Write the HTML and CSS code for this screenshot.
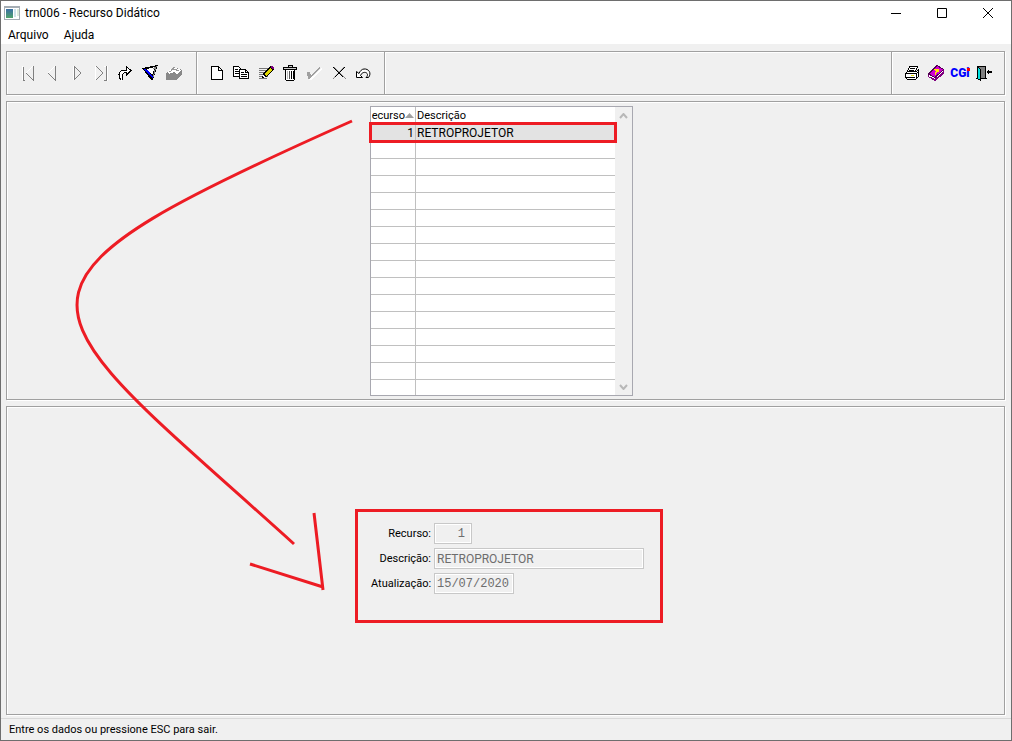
FILE: index.html
```html
<!DOCTYPE html>
<html lang="pt-BR">
<head>
<meta charset="utf-8">
<title>trn006 - Recurso Didático</title>
<link rel="stylesheet" href="styles.css">
</head>
<body>
<div class="window">
  <header class="titlebar">
    <svg class="app-icon" width="16" height="14" viewBox="0 0 16 14" shape-rendering="crispEdges"><defs><linearGradient id="g" x2="0" y2="1"><stop offset="0" stop-color="#3a6ea5"/><stop offset="1" stop-color="#4fa36a"/></linearGradient></defs><path fill="#a5adb3" d="M0 0h16v14H0z"/><path fill="#fff" d="M1 2h14v11H1z"/><path fill="url(#g)" d="M2 3h7v9H2z"/><path fill="#cfe3e8" d="M10 3h2v8h-2z"/><path fill="#dcebdc" d="M13 3h2v7h-2z"/></svg>
    <h1 class="title">trn006 - Recurso Didático</h1>
    <button class="caption" aria-label="Minimizar"><svg width="12" height="12"><path d="M1 6.500h10"/></svg></button>
    <button class="caption" aria-label="Maximizar"><svg width="12" height="12"><path d="M1.500 1.500h9v9h-9z"/></svg></button>
    <button class="caption" aria-label="Fechar"><svg width="12" height="12"><path d="M1 1l10 10M11 1L1 11"/></svg></button>
  </header>
  <nav class="menubar"><button class="menu">Arquivo</button><button class="menu">Ajuda</button></nav>

  <main class="content">
    <div class="toolbar etched" role="toolbar">
      <div class="group nav-group">
        <button class="tool" aria-label="Primeiro"><svg viewBox="0 0 16 16"><path class="w" d="M2.500 1v14M13 1L6 8"/><path class="g" d="M3.500 2v13M3 15.500h2M13.500 1v15M6 8l7 7"/></svg></button>
        <button class="tool" aria-label="Anterior"><svg viewBox="0 0 16 16"><path class="w" d="M11 1L4 8"/><path class="g" d="M11.500 1v15M4 8l7 7"/></svg></button>
        <button class="tool" aria-label="Próximo"><svg viewBox="0 0 16 16"><path class="w" d="M4.500 1v14"/><path class="g" d="M5.500 1v14M5 1l7 7-7 7"/></svg></button>
        <button class="tool" aria-label="Último"><svg viewBox="0 0 16 16"><path class="w" d="M2.500 1v14M11 1.500h2M14.500 1v15"/><path class="g" d="M3 1l7 7-7 7M13.500 1v14h-3"/></svg></button>
        <button class="tool" aria-label="Ir para"><svg viewBox="0 0 16 16"><path fill="#fff" stroke="#000" d="M4.500 15.500C1 12 1 7 5 5.500h4v-4l5 4-5 5v-3C6 7.500 4 10 6 14.500"/></svg></button>
        <button class="tool" aria-label="Filtrar"><svg viewBox="0 0 16 16"><path fill="#000" d="M0 3l16-3-5 15H9z"/><path fill="#0000ff" d="M2 4l4 1 5 7-1 1z"/><path fill="#fff" d="M5 4l8-2-3 8z"/><path stroke="#888" d="M11 4l3-2-3 10"/></svg></button>
        <button class="tool" aria-label="Registros"><svg viewBox="0 0 16 16"><path fill="#888" d="M0 8l8-6 8 3v5l-6 5H0z"/><path fill="#fff" d="M1 7l7-5 7 3-4 4-3-2-5 2z"/><path stroke="#999" d="M3 7l5-3 5 2M5 5l4-3"/></svg></button>
      </div>
      <div class="group edit-group">
        <button class="tool" aria-label="Novo"><svg viewBox="0 0 16 16"><path fill="#fff" stroke="#000" d="M2.500 1.500h7l4 4v9h-11zM9.500 1.500v4h4"/></svg></button>
        <button class="tool" aria-label="Copiar"><svg viewBox="0 0 16 16"><path fill="#fff" stroke="#000" d="M.5 1.500h5l3 3v7h-8z"/><path stroke="#000" d="M2 4.500h3M2 6.500h5M2 8.500h5"/><path fill="#fff" stroke="#000" d="M6.500 4.500h6l3 3v6h-9zM12.500 4.500v3h3"/><path stroke="#000" d="M8 7.500h3M8 9.500h6M8 11.500h6"/></svg></button>
        <button class="tool" aria-label="Editar"><svg viewBox="0 0 16 16"><path stroke="#777" d="M1 3.500h9M1 5.500h8M1 7.500h6M1 9.500h5M1 11.500h9M1 13.500h8"/><path fill="#000" d="M4 13l1-4 7-8h2l2 2v2l-8 7z"/><path fill="#e0d800" d="M6 9l6-6 2 2-6 6z"/><path fill="#fff" d="M5 12v-2l2 2z"/><path fill="#800080" d="M12 2l2-1 2 2-1 2z"/></svg></button>
        <button class="tool" aria-label="Excluir"><svg viewBox="0 0 16 16"><path fill="#fff" stroke="#000" d="M3.500 4.500h9v10l-1 1h-7l-1-1z"/><path fill="#ccc" stroke="#000" d="M1.500 2.500h13v2h-13zM6.500 2.500v-2h4v2"/><path stroke="#bbb" d="M5.500 6v8"/><path stroke="#555" d="M7.500 6v8"/><path stroke="#000" d="M9.500 6v8M11.500 6v8"/></svg></button>
        <button class="tool" aria-label="Confirmar"><svg viewBox="0 0 16 16"><path fill="#fff" d="M2 9h3l2 2 9-8v2L5 15H3z"/><path fill="#a0a0a0" d="M1 7h3l1 3 9-8v1L4 14H2z"/></svg></button>
        <button class="tool" aria-label="Cancelar"><svg viewBox="0 0 16 16" class="smooth"><path stroke="#888" d="M3 2l12 12M13 2L2 14"/><path stroke="#000" d="M2 2l10 10M14 2L4 12"/></svg></button>
        <button class="tool" aria-label="Desfazer"><svg viewBox="0 0 16 16" class="smooth"><path fill="#fff" stroke="#000" d="M1.500 6.500v6h6L5.500 10.500C7 6.500 12 6.500 12.500 9.500c0 1.500-.5 2-1.500 3h2.500C17 8 13.500 3.500 9 4c-2 0-4 2-5 4.500z"/></svg></button>
      </div>
      <div class="group side-group">
        <button class="tool" aria-label="Imprimir"><svg viewBox="0 0 16 16"><path fill="#fff" stroke="#000" d="M3.500 6.500l2-5h8l-2 5M1.500 8.500l2-2h9l2-2v7l-3 3h-8l-2-2z"/><path stroke="#000" d="M6 3.500h5M5 5.500h5M2 8.500h10v5M2 12.500h9M13 8l2-2"/><path fill="#e0d800" d="M7 10h3v1H7z"/></svg></button>
        <button class="tool" aria-label="Manual"><svg viewBox="0 0 16 16"><path fill="#fff" stroke="#800080" d="M.5 9.500L9 .5l6.500 4v4L7 15.500l-6.500-4z"/><path fill="#d000d0" stroke="#500050" d="M.5 9L9 .5l6.500 4L7 12.500z"/><path stroke="#ffe800" d="M6 4.500h4v2l-3 1v2M7 5.500h4"/><path stroke="#800080" d="M2 12l5 2.500 8-7"/></svg></button>
        <button class="tool cgi">CGi</button>
        <button class="tool" aria-label="Sair"><svg viewBox="0 0 16 16"><path fill="#808080" stroke="#000" d="M1.500 1.500h8v12h-8z"/><path fill="#00e0e0" stroke="#000" d="M1.500 1.500l3 3v11l-3-2z"/><path fill="#000" d="M10 7l3-3v2h3v2h-3v2z"/><path stroke="#000" d="M0 13.500h2M9 13.500h2"/></svg></button>
      </div>
    </div>

    <section class="list-panel etched">
      <div class="grid">
        <table class="records">
          <thead><tr><th class="code"><div class="sort"><span>Recurso</span><svg width="9" height="5"><path fill="#a0a0a0" d="M0 5l4.500-5L9 5z"/></svg></div></th><th>Descrição</th></tr></thead>
          <tbody>
            <tr class="selected"><td class="code">1</td><td>RETROPROJETOR</td></tr>
            <tr><td></td><td></td></tr><tr><td></td><td></td></tr><tr><td></td><td></td></tr>
            <tr><td></td><td></td></tr><tr><td></td><td></td></tr><tr><td></td><td></td></tr>
            <tr><td></td><td></td></tr><tr><td></td><td></td></tr><tr><td></td><td></td></tr>
            <tr><td></td><td></td></tr><tr><td></td><td></td></tr><tr><td></td><td></td></tr>
            <tr><td></td><td></td></tr><tr><td></td><td></td></tr><tr class="last"><td></td><td></td></tr>
          </tbody>
        </table>
        <div class="scroll">
          <button class="arrow" aria-label="Rolar para cima"><svg width="9" height="6"><path d="M1 5l3.500-4L8 5"/></svg></button>
          <button class="arrow" aria-label="Rolar para baixo"><svg width="9" height="6"><path d="M1 1l3.500 4L8 1"/></svg></button>
        </div>
      </div>
    </section>

    <section class="detail-panel etched">
      <form class="form">
        <label for="rec">Recurso:</label><input id="rec" class="field mono short" value="1" disabled>
        <label for="desc">Descrição:</label><input id="desc" class="field" value="RETROPROJETOR" disabled>
        <label for="upd">Atualização:</label><input id="upd" class="field mono date" value="15/07/2020" disabled>
      </form>
    </section>
  </main>

  <footer class="status">Entre os dados ou pressione ESC para sair.</footer>

  <svg class="notes" width="1012" height="741" viewBox="0 0 1012 741">
    <path d="M352 121C-33 292 23 299 294 544M314 513l9 77M250 564l73 23"/>
    <path class="box" d="M370.500 123.500h245v18h-245zM356.500 510.500h305v111h-305z"/>
  </svg>
</div>
</body>
</html>
```
FILE: styles.css
```css
* { box-sizing: border-box; }
body { margin: 0; font: 11px/16px Roboto, "Liberation Sans", Arial, sans-serif; color: #000; }
button { font: inherit; color: inherit; background: none; border: 0; padding: 0; }
.window { position: relative; display: flex; flex-direction: column; min-height: 100vh; border: 1px solid #6e6e6e; background: #f0f0f0; }
.titlebar { display: flex; align-items: center; height: 24px; padding-left: 3px; background: #fff; }
.title { flex: 1; margin: 0 0 0 5px; font: 12px/16px Roboto, "Open Sans", sans-serif; }
.caption { display: grid; place-items: center; width: 46px; height: 24px; }
.caption svg { fill: none; stroke: #000; }
.menubar { display: flex; gap: 15px; height: 19px; padding-left: 7px; background: #fff; font: 12px/20px Roboto, "Open Sans", sans-serif; }
.content { flex: 1; display: flex; flex-direction: column; gap: 6px; padding: 7px 6px 3px 5px; }
.etched { border: 1px solid #a0a0a0; box-shadow: 1px 1px 0 #fff, inset 1px 1px 0 #fff; }
.toolbar { display: flex; height: 44px; }
.group { display: flex; align-items: center; justify-content: space-between; padding-bottom: 1px; }
.nav-group { width: 190px; padding-left: 9px; padding-right: 10px; border-right: 1px solid #a0a0a0; }
.edit-group { width: 188px; padding-left: 8px; padding-right: 9px; border-right: 1px solid #a0a0a0; box-shadow: inset 1px 0 0 #fff, 1px 0 0 #fff; }
.side-group { width: 113px; margin-left: auto; padding-left: 8px; padding-right: 8px; border-left: 1px solid #a0a0a0; box-shadow: inset 1px 0 0 #fff; }
.tool { display: grid; place-items: center; width: 24px; height: 24px; }
.tool svg { width: 16px; height: 16px; fill: none; shape-rendering: crispEdges; }
.tool .smooth { shape-rendering: auto; }
.w { stroke: #fff; }
.g { stroke: #808080; }
.cgi { position: relative; color: #00f; font-weight: 900; font-size: 12px; }
.cgi::after { content: ""; position: absolute; top: 7px; right: 2px; width: 3px; height: 3px; background: #f00; }
.list-panel { display: flex; justify-content: center; padding: 4px 8px 3px 0; }
.grid { display: flex; border: 1px solid #a8a8b0; background: #fff; }
.records { width: 244px; table-layout: fixed; border-collapse: separate; border-spacing: 0; }
.records th, .records td { height: 17px; padding: 0 1px; border-bottom: 1px solid #c0c0c0; font-weight: normal; text-align: left; line-height: 16px; }
.records td { font-size: 12px; }
.records th { height: 18px; line-height: 17px; }
.records th:first-child, .records td:first-child { width: 45px; border-right: 1px solid #c0c0c0; }
.records .code { text-align: right; }
.records .last td { height: 15px; border-bottom: 0; }
.selected { background: #e3e3e3; }
.sort { display: flex; align-items: center; justify-content: flex-end; overflow: hidden; }
.sort svg { flex: none; }
.scroll { display: flex; flex-direction: column; justify-content: space-between; width: 17px; padding-right: 1px; background: #f0f0f0; }
.arrow { display: grid; place-items: center; width: 16px; height: 17px; }
.arrow svg { fill: none; stroke: #b8b8b8; stroke-width: 2; }
.detail-panel { flex: 1; display: flex; align-items: center; justify-content: center; padding: 0 0 4px 4px; }
.form { display: grid; grid-template-columns: 60px 210px; gap: 4px 3px; align-items: center; }
.form label { text-align: right; white-space: nowrap; }
.field { width: 210px; height: 21px; padding: 0 2px; border: 1px solid #c8c8c8; box-shadow: inset 0 0 0 1px #fff; background: #f0f0f0; color: #6d6d6d; font: 12px/16px Roboto, "Liberation Sans", Arial, sans-serif; }
.mono { font: 12px/16px "Liberation Mono", "Courier New", monospace; }
.short { width: 38px; padding-right: 6px; text-align: right; }
.date { width: 80px; }
.status { height: 22px; padding-left: 8px; border-top: 1px solid #d9d9d9; line-height: 21px; }
.notes { position: absolute; top: -1px; left: -1px; fill: none; stroke: #ed1c24; stroke-width: 3; pointer-events: none; }
```
